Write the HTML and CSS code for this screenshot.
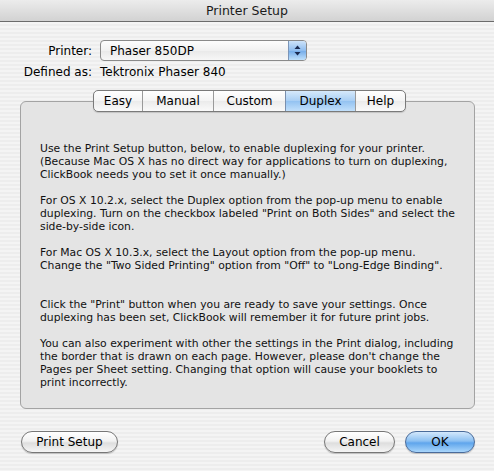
FILE: index.html
```html
<!DOCTYPE html>
<html lang="en">
<head>
    <meta charset="UTF-8">
    <title>Printer Setup</title>
    <link rel="stylesheet" href="styles.css">
</head>
<body>
    <div class="window">
        <!-- 제목 표시줄 -->
        <div class="titlebar">Printer Setup</div>

        <div class="content">
            <!-- 프린터 선택 -->
            <div class="printer-grid">
                <span class="label">Printer:</span>
                <div class="popup">
                    <span class="popup-text">Phaser 850DP</span>
                    <span class="popup-arrows">
                        <svg width="7" height="11" viewBox="0 0 7 11">
                            <path d="M3.5 0.5 L6.5 4 L0.5 4 Z" fill="#1a2a50"/>
                            <path d="M3.5 10.5 L6.5 7 L0.5 7 Z" fill="#1a2a50"/>
                        </svg>
                    </span>
                </div>
                <span class="label">Defined as:</span>
                <span class="value">Tektronix Phaser 840</span>
            </div>

            <!-- 탭 박스 -->
            <div class="tabbox">
                <div class="tabs">
                    <span class="tab tab-easy">Easy</span>
                    <span class="tab tab-manual">Manual</span>
                    <span class="tab tab-custom">Custom</span>
                    <span class="tab tab-duplex selected">Duplex</span>
                    <span class="tab tab-help">Help</span>
                </div>
                <div class="panel">
                    <p>Use the Print Setup button, below, to enable duplexing for your printer.<br>
                    (Because Mac OS X has no direct way for applications to turn on duplexing,<br>
                    ClickBook needs you to set it once manually.)</p>
                    <p>For OS X 10.2.x, select the Duplex option from the pop-up menu to enable<br>
                    duplexing. Turn on the checkbox labeled "Print on Both Sides" and select the<br>
                    side-by-side icon.</p>
                    <p>For Mac OS X 10.3.x, select the Layout option from the pop-up menu.<br>
                    Change the "Two Sided Printing" option from "Off" to "Long-Edge Binding".</p>
                    <p class="gap">Click the "Print" button when you are ready to save your settings. Once<br>
                    duplexing has been set, ClickBook will remember it for future print jobs.</p>
                    <p>You can also experiment with other the settings in the Print dialog, including<br>
                    the border that is drawn on each page. However, please don't change the<br>
                    Pages per Sheet setting. Changing that option will cause your booklets to<br>
                    print incorrectly.</p>
                </div>
            </div>

            <!-- 하단 버튼 -->
            <div class="buttons">
                <button class="btn btn-setup">Print Setup</button>
                <div class="right-buttons">
                    <button class="btn btn-cancel">Cancel</button>
                    <button class="btn btn-ok">OK</button>
                </div>
            </div>
        </div>
    </div>
</body>
</html>
```

FILE: styles.css
```css
body {
    margin: 0;
    font-family: "DejaVu Sans", sans-serif;
    color: #000;
}
.window {
    width: 494px;
    height: 471px;
    overflow: hidden;
    background: repeating-linear-gradient(to bottom, #ededed 0, #ededed 2px, #f4f4f4 2px, #f4f4f4 4px);
}
.titlebar {
    height: 21px;
    line-height: 21px;
    text-align: center;
    font-size: 12.5px;
    color: #1a1a1a;
    background: linear-gradient(to bottom, #ececec, #d2d2d2);
    border-bottom: 1px solid #6b6b6b;
}
.content {
    padding: 18px 19px 0 20px;
}
.printer-grid {
    display: grid;
    grid-template-columns: 72px auto;
    column-gap: 8px;
    row-gap: 4px;
    align-items: center;
    font-size: 12px;
}
.label {
    text-align: right;
}
.popup {
    width: 205px;
    height: 19px;
    display: flex;
    align-items: center;
    justify-content: space-between;
    border: 1px solid #8a8a8a;
    border-radius: 4px;
    background: linear-gradient(to bottom, #fdfdfd, #f1f1f1 50%, #e9e9e9 51%, #f7f7f7);
    overflow: hidden;
}
.popup-text {
    padding-left: 9px;
}
.popup-arrows {
    width: 17px;
    height: 19px;
    display: flex;
    align-items: center;
    justify-content: center;
    border-left: 1px solid #7b95b8;
    background: linear-gradient(to bottom, #cde3f9, #8fbdef 50%, #72aae8 51%, #bfe0fb);
}
.tabbox {
    position: relative;
    margin-top: 11px;
    padding-top: 11px;
}
.tabs {
    position: absolute;
    top: 0;
    left: 73px;
    display: flex;
    height: 20px;
    border: 1px solid #7a7a7a;
    border-radius: 5px;
    overflow: hidden;
    background: linear-gradient(to bottom, #ffffff, #f4f4f4 50%, #ebebeb 51%, #fafafa);
    box-shadow: 0 1px 1px rgba(0, 0, 0, 0.15);
    z-index: 1;
}
.tab {
    font-size: 12px;
    line-height: 20px;
    text-align: center;
    border-left: 1px solid #9a9a9a;
}
.tab-easy { width: 48px; border-left: none; }
.tab-manual { width: 70px; }
.tab-custom { width: 71px; }
.tab-duplex { width: 69px; }
.tab-help { width: 49px; }
.tab.selected {
    border-left-color: #7a8fad;
    background: linear-gradient(to bottom, #d6e9fb, #a8cef4 50%, #93c2f1 51%, #c2e0fb);
}
.panel {
    height: 308px;
    box-sizing: border-box;
    padding: 40px 6px 0 19px;
    background: #e4e4e4;
    border: 1px solid #a3a3a3;
    border-radius: 6px;
    font-size: 10.8px;
    line-height: 13px;
    color: #111;
    white-space: nowrap;
}
.panel p {
    margin: 0 0 13px 0;
}
.panel p.gap {
    margin-top: 26px;
}
.buttons {
    display: flex;
    justify-content: space-between;
    margin-top: 22px;
}
.right-buttons {
    display: flex;
    gap: 10px;
}
.btn {
    height: 22px;
    padding: 0;
    font-family: "DejaVu Sans", sans-serif;
    font-size: 12px;
    color: #000;
    border: 1px solid #777;
    border-radius: 11px;
    background: linear-gradient(to bottom, #ffffff, #f2f2f2 45%, #dedede 55%, #f5f5f5);
    box-shadow: 0 1px 1px rgba(0, 0, 0, 0.2);
}
.btn-setup { width: 97px; margin-left: 1px; }
.btn-cancel { width: 71px; }
.btn-ok {
    width: 70px;
    border-color: #4a6b9a;
    background: linear-gradient(to bottom, #d3e8fc, #8cc0f2 45%, #5fa5ec 55%, #a9d6fb);
}
```
